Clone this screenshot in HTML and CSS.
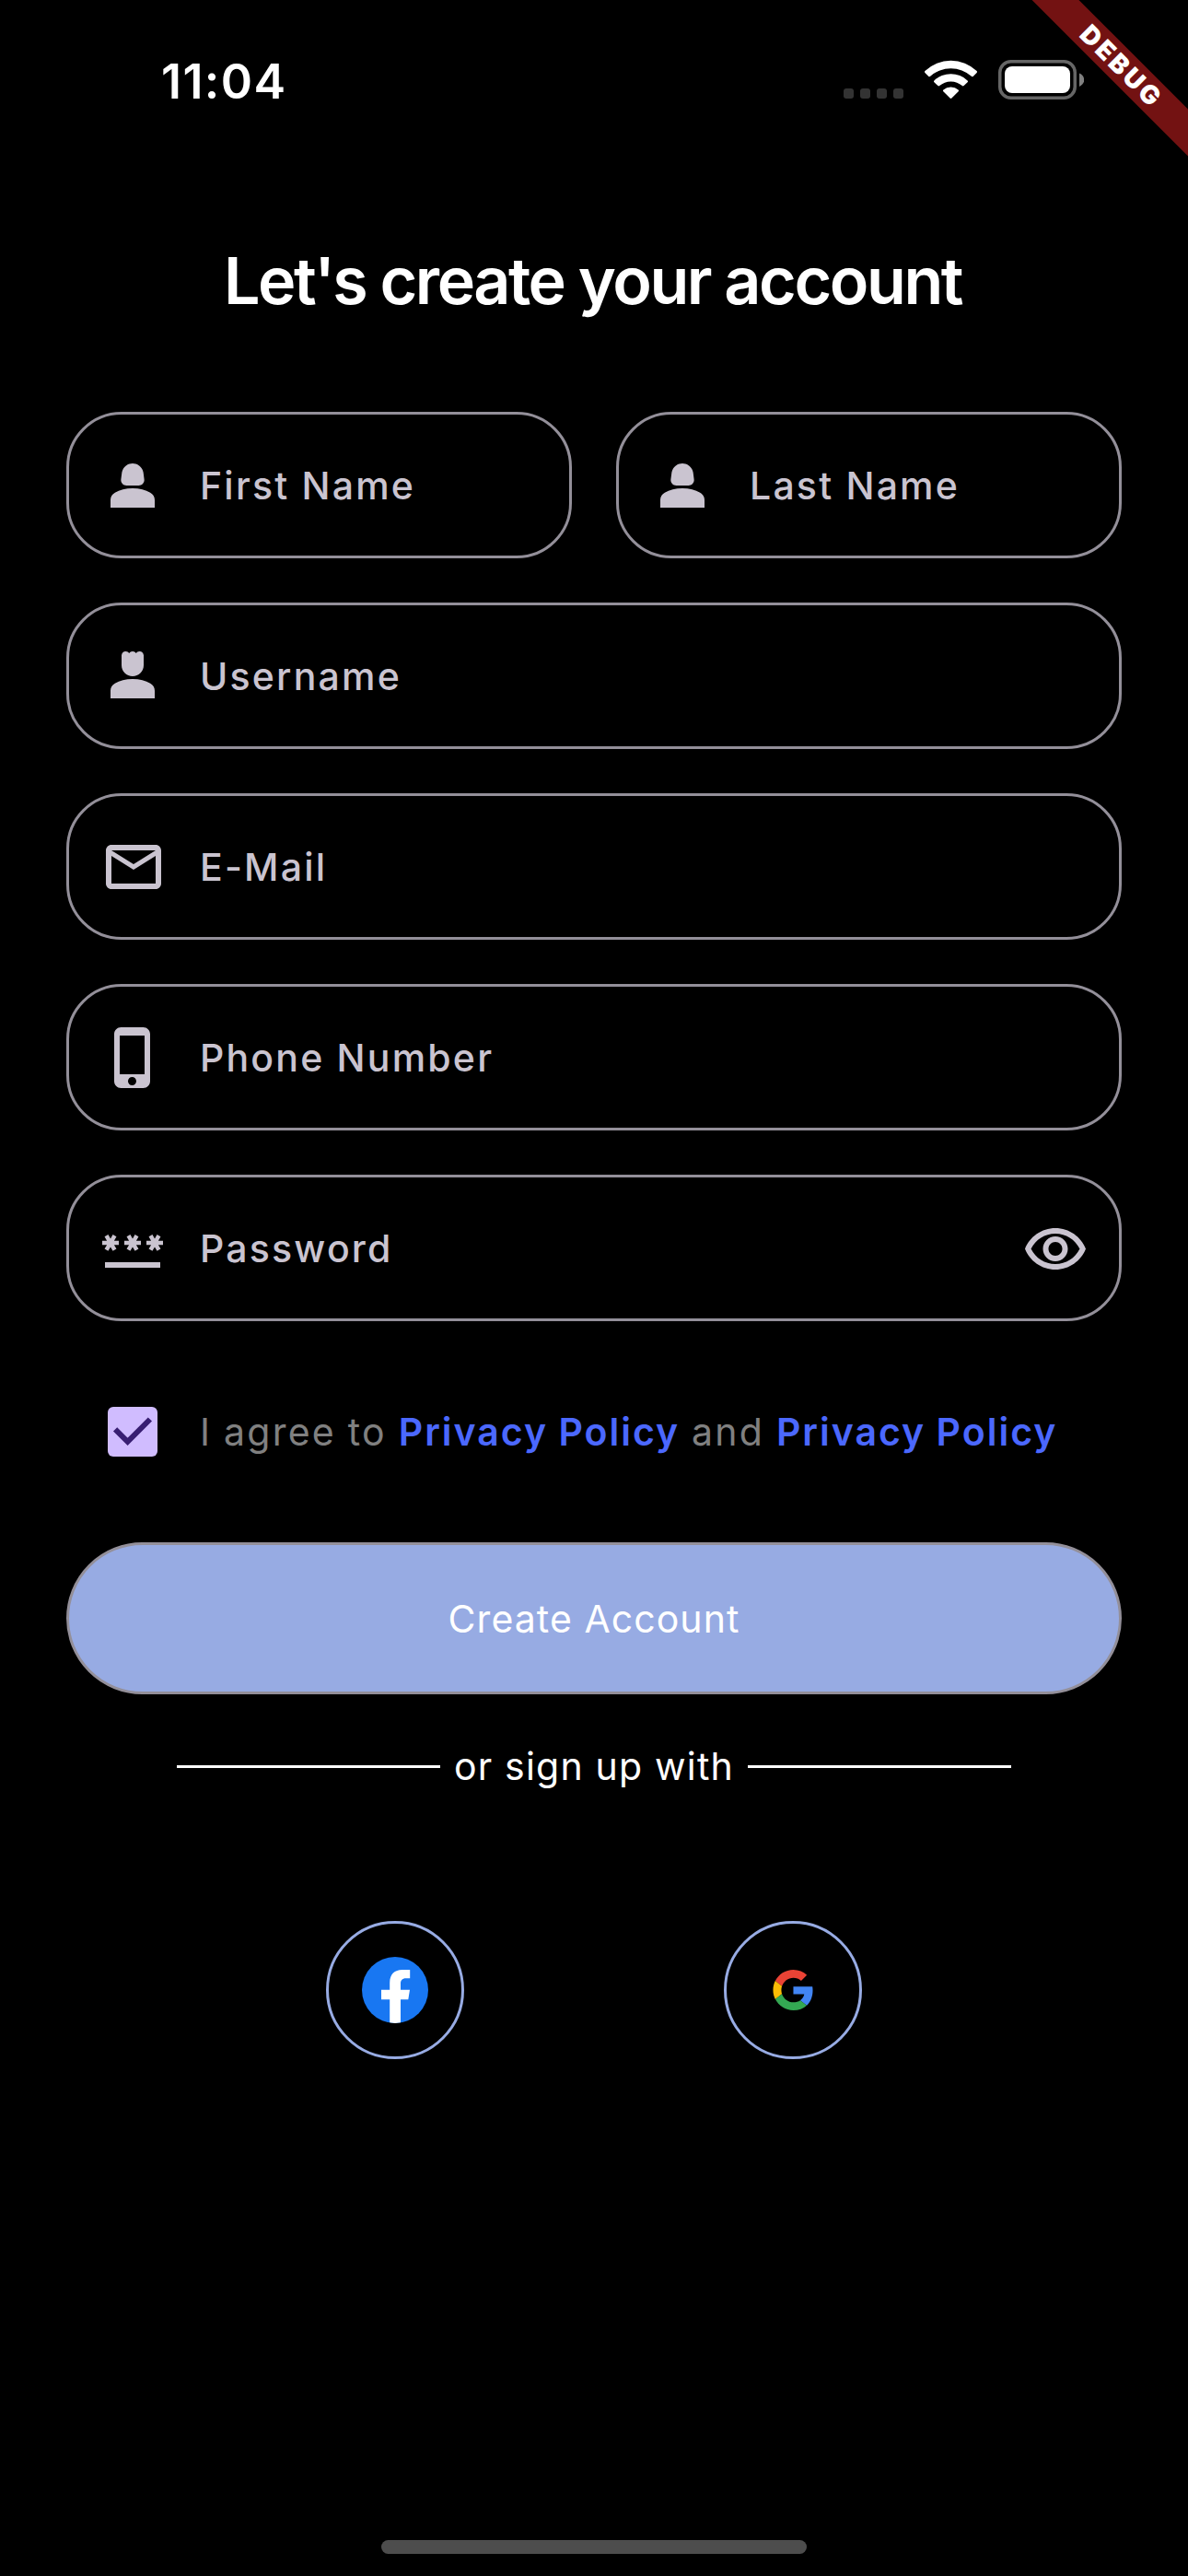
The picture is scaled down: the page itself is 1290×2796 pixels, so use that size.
FILE: index.html
```html
<!DOCTYPE html>
<html lang="en">
<head>
<meta charset="utf-8">
<title>Create account</title>
<link rel="stylesheet" href="styles.css">
</head>
<body>
<header class="status">
  <span class="status-time">11:04</span>
  <div class="status-icons">
    <svg width="65" height="43" viewBox="0 0 65 43" fill="#333"><rect x="0" y="31" width="11" height="11" rx="3"/><rect x="18" y="31" width="11" height="11" rx="3"/><rect x="36" y="31" width="11" height="11" rx="3"/><rect x="54" y="31" width="11" height="11" rx="3"/></svg>
    <svg width="57" height="43" viewBox="0 0 57 43" fill="#fff"><path d="M.4 12.1A40.5 40.5 0 0 1 56.6 12.1Q57.4 13 56.6 13.9L52.6 17.9Q51.8 18.7 50.8 17.8A33.5 33.5 0 0 0 6.2 17.8Q5.2 18.7 4.4 17.9L.4 13.9Q-.4 13 .4 12.1Z"/><path d="M10.4 22.4A26.5 26.5 0 0 1 46.6 22.4Q47.5 23.3 46.6 24.2L42.6 28.1Q41.7 28.9 40.8 28.1A18.5 18.5 0 0 0 16.2 28.1Q15.3 28.9 14.4 28.1L10.4 24.2Q9.5 23.3 10.4 22.4Z"/><path d="M20.4 32.4A12.5 12.5 0 0 1 36.6 32.4Q37.6 33.3 36.7 34.2L29.4 41.5Q28.5 42.3 27.6 41.5L20.3 34.2Q19.4 33.3 20.4 32.4Z"/></svg>
    <svg width="93" height="43" viewBox="0 0 93 43"><rect x="1.75" y="1.75" width="81.5" height="39.5" rx="12" fill="none" stroke="#666" stroke-width="3.5"/><rect x="7" y="7" width="71" height="29" rx="8" fill="#fff"/><path d="M88 14.5C95 17.5 95 26 88 29Z" fill="#808080"/></svg>
  </div>
</header>
<div class="debug"><span class="debug-band">DEBUG</span></div>

<main class="page">
  <h1 class="title">Let's create your account</h1>
  <form class="form">
    <div class="row">
      <label class="field"><svg class="icon" viewBox="0 0 24 24"><path d="M18.39 14.56C16.71 13.7 14.53 13 12 13s-4.71.7-6.39 1.56C4.61 15.07 4 16.1 4 17.22V20h16v-2.78c0-1.12-.61-2.15-1.61-2.66zM9.78 12h4.44c1.21 0 2.14-1.06 1.98-2.26l-.32-2.45C15.57 5.39 13.92 4 12 4S8.43 5.39 8.12 7.29L7.8 9.74C7.64 10.94 8.57 12 9.78 12z"/></svg><span>First Name</span></label>
      <label class="field"><svg class="icon" viewBox="0 0 24 24"><path d="M18.39 14.56C16.71 13.7 14.53 13 12 13s-4.71.7-6.39 1.56C4.61 15.07 4 16.1 4 17.22V20h16v-2.78c0-1.12-.61-2.15-1.61-2.66zM9.78 12h4.44c1.21 0 2.14-1.06 1.98-2.26l-.32-2.45C15.57 5.39 13.92 4 12 4S8.43 5.39 8.12 7.29L7.8 9.74C7.64 10.94 8.57 12 9.78 12z"/></svg><span>Last Name</span></label>
    </div>
    <label class="field"><svg class="icon" viewBox="0 0 24 24"><path d="M18.39 14.56C16.71 13.7 14.53 13 12 13s-4.71.7-6.39 1.56C4.61 15.07 4 16.1 4 17.22V20h16v-2.78c0-1.12-.61-2.15-1.61-2.66zM12 12c2.21 0 4-1.79 4-4V4.5C16 3.67 15.33 3 14.5 3c-.52 0-.98.27-1.25.67C12.98 3.27 12.52 3 12 3s-.98.27-1.25.67C10.48 3.27 10.02 3 9.5 3 8.67 3 8 3.67 8 4.5V8c0 2.21 1.79 4 4 4z"/></svg><span>Username</span></label>
    <label class="field"><svg class="icon" viewBox="-.33 0 24 24"><path d="M22 6c0-1.1-.9-2-2-2H4c-1.1 0-2 .9-2 2v12c0 1.1.9 2 2 2h16c1.1 0 2-.9 2-2V6zm-2 0l-8 5-8-5h16zm0 12H4V8l8 5 8-5v10z"/></svg><span>E-Mail</span></label>
    <label class="field"><svg class="icon" viewBox="-.33 0 24 24"><path d="M15.5 1h-8C6.12 1 5 2.12 5 3.5v17C5 21.88 6.12 23 7.5 23h8c1.38 0 2.5-1.12 2.5-2.5v-17C18 2.12 16.88 1 15.5 1zm-4 21c-.83 0-1.5-.67-1.5-1.5s.67-1.5 1.5-1.5 1.5.67 1.5 1.5-.67 1.5-1.5 1.5zm4.5-4H7V4h9v14z"/></svg><span>Phone Number</span></label>
    <label class="field"><svg class="icon" viewBox="0 0 24 24"><path d="M2 17h20v2H2v-2zm1.15-4.05L4 11.47l.85 1.48 1.3-.75-.85-1.48H7v-1.5H5.3l.85-1.47L4.85 7 4 8.47 3.15 7l-1.3.75.85 1.47H1v1.5h1.7l-.85 1.48 1.3.75zm6.7-.75l1.3.75.85-1.48.85 1.48 1.3-.75-.85-1.48H15v-1.5h-1.7l.85-1.47-1.3-.75L12 8.47 11.15 7l-1.3.75.85 1.47H9v1.5h1.7l-.85 1.48zM23 9.22h-1.7l.85-1.47-1.3-.75L20 8.47 19.15 7l-1.3.75.85 1.47H17v1.5h1.7l-.85 1.48 1.3.75.85-1.48.85 1.48 1.3-.75-.85-1.48H23v-1.5z"/></svg><span>Password</span><svg class="icon icon-end" viewBox="0 0 24 24"><path d="M12 6c3.79 0 7.17 2.13 8.82 5.5C19.17 14.87 15.79 17 12 17s-7.17-2.13-8.82-5.5C4.83 8.13 8.21 6 12 6m0-2C7 4 2.73 7.11 1 11.5 2.73 15.89 7 19 12 19s9.27-3.11 11-7.5C21.27 7.11 17 4 12 4zm0 5c1.38 0 2.5 1.12 2.5 2.5S13.38 14 12 14s-2.5-1.12-2.5-2.5S10.62 9 12 9m0-2c-2.48 0-4.5 2.02-4.5 4.5S9.52 16 12 16s4.5-2.02 4.5-4.5S14.48 7 12 7z"/></svg></label>

    <div class="agree">
      <svg class="checkbox" width="54" height="54" viewBox="0 0 54 54"><rect width="54" height="54" rx="6" fill="#d0bcff"/><path d="M8.1 24.3L21.6 37.8L45.9 13.5" fill="none" stroke="#381e72" stroke-width="6"/></svg>
      <p class="agree-text">I agree to <b class="link">Privacy Policy</b> and <b class="link">Privacy Policy</b></p>
    </div>
    <button class="submit" type="button">Create Account</button>
  </form>

  <div class="divider"><span class="line"></span><span class="divider-text">or sign up with</span><span class="line"></span></div>

  <div class="social">
    <div class="social-btn">
      <svg width="72" height="72" viewBox="0 0 72 72"><defs><clipPath id="disc"><circle cx="36" cy="36" r="36"/></clipPath></defs><g clip-path="url(#disc)"><rect width="72" height="72" fill="#1877f2"/><path d="M30.2 73V46.3H21V35.7H30.2V28C30.2 18.9 35.4 14 43.9 14H52.2V23.3H48C43.4 23.3 42 26 42 28.8V35.7H52L50.3 46.3H42V73Z" fill="#fff"/></g></svg>
    </div>
    <div class="social-btn">
      <svg width="44" height="44" viewBox="-.5 0 48 48"><path fill="#ea4335" d="M24 9.5c3.54 0 6.71 1.22 9.21 3.6l6.85-6.85C35.9 2.38 30.47 0 24 0 14.62 0 6.51 5.38 2.56 13.22l7.98 6.19C12.43 13.72 17.74 9.5 24 9.5z"/><path fill="#4285f4" d="M46.98 24.55c0-1.57-.15-3.09-.38-4.55H24v9.02h12.94c-.58 2.96-2.26 5.48-4.78 7.18l7.73 6c4.51-4.18 7.09-10.36 7.09-17.65z"/><path fill="#fbbc05" d="M10.53 28.59c-.48-1.45-.76-2.99-.76-4.59s.27-3.14.76-4.59l-7.98-6.19C.92 16.46 0 20.12 0 24c0 3.88.92 7.54 2.56 10.78l7.97-6.19z"/><path fill="#34a853" d="M24 48c6.48 0 11.93-2.13 15.89-5.81l-7.73-6c-2.15 1.45-4.92 2.3-8.16 2.3-6.26 0-11.57-4.22-13.47-9.91l-7.98 6.19C6.51 42.62 14.62 48 24 48z"/></svg>
    </div>
  </div>
</main>
<footer class="home"><span class="home-bar"></span></footer>
</body>
</html>
```
FILE: styles.css
```css
* { box-sizing: border-box; }

body {
  margin: 0;
  min-height: 2796px;
  display: flex;
  flex-direction: column;
  position: relative;
  background: #000;
  color: #fff;
  font-family: Inter, "Liberation Sans", sans-serif;
  font-size: 41px;
  line-height: 50px;
}

svg { display: block; flex: none; }

.status {
  height: 173px;
  padding: 0 113px 0 175px;
  display: flex;
  align-items: center;
  justify-content: space-between;
}
.status-time {
  margin-top: 4px;
  font-size: 52px;
  line-height: 63px;
  font-weight: 600;
  letter-spacing: 1.4px;
}
.status-icons { display: flex; gap: 23px; }

.debug {
  position: absolute;
  top: 0;
  right: 0;
  width: 170px;
  height: 170px;
  overflow: hidden;
}
.debug-band {
  position: absolute;
  left: -52px;
  top: 54px;
  width: 300px;
  height: 36px;
  transform: rotate(45deg);
  background: #731212;
  text-align: center;
  font-size: 28px;
  line-height: 36px;
  font-weight: 900;
  letter-spacing: 3.2px;
}

.page { padding: 89px 72px 0; }

.title {
  margin: 0 0 100px;
  padding-right: 3px;
  text-align: center;
  font-size: 70px;
  line-height: 85px;
  font-weight: 600;
  letter-spacing: -2.44px;
}

.form { display: flex; flex-direction: column; gap: 48px; }
.row { display: grid; grid-template-columns: 549px 549px; justify-content: space-between; }

.field {
  height: 159px;
  padding: 1px 33px 0;
  display: flex;
  align-items: center;
  gap: 37px;
  border: 3px solid #938f99;
  border-radius: 60px;
  color: #cac4d0;
  font-weight: 500;
  letter-spacing: 2.2px;
}
.icon { width: 72px; height: 72px; fill: #cac4d0; }
.icon-end { margin: 3px 0 0 auto; }

.agree {
  margin-top: 45px;
  padding-left: 45px;
  display: flex;
  align-items: center;
  gap: 46px;
}
.agree-text { margin: 0; color: #808080; letter-spacing: 2.25px; word-spacing: -1px; white-space: nowrap; }
.link { color: #4b68ff; font-weight: 600; letter-spacing: 2px; }

.submit {
  margin-top: 45px;
  height: 165px;
  padding: 1px 0 0;
  border: 3px solid #938f99;
  border-radius: 83px;
  background: #97abe3;
  color: #fff;
  font: inherit;
  letter-spacing: 1.05px;
}

.divider {
  width: 906px;
  margin: 53px auto 0;
  display: flex;
  align-items: center;
}
.line { width: 286px; height: 3px; background: #fff; }
.divider-text { flex: 1; text-align: center; letter-spacing: 1.2px; }

.social {
  margin-top: 143px;
  padding: 0 282px;
  display: flex;
  justify-content: space-between;
}
.social-btn {
  width: 150px;
  height: 150px;
  display: grid;
  place-items: center;
  border: 3px solid #97abe3;
  border-radius: 50%;
}

.home { margin-top: auto; padding-bottom: 24px; display: flex; justify-content: center; }
.home-bar { width: 462px; height: 15px; border-radius: 8px; background: #4d4d4d; }
```
